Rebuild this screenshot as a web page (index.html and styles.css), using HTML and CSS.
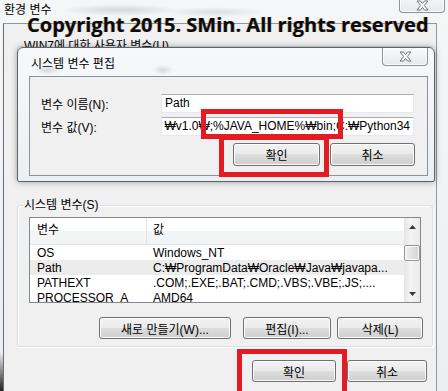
FILE: index.html
```html
<!DOCTYPE html>
<html lang="ko">
<head>
    <meta charset="utf-8">
    <title>환경 변수</title>
    <link rel="stylesheet" href="styles.css">
</head>
<body>
<div class="screen">
    <div class="win">
        <div class="win-title">
            <span class="win-caption">환경 변수</span>
            <div class="close-btn win-close">
                <svg width="13" height="11" viewBox="0 0 13 11"><polygon points="1,1 4.5,1 6.5,3.6 8.5,1 12,1 8.3,5.5 12,10 8.5,10 6.5,7.4 4.5,10 1,10 4.7,5.5" /></svg>
            </div>
        </div>
        <div class="win-client">
            <fieldset class="group user-group">
                <legend>WIN7에 대한 사용자 변수(U)</legend>
            </fieldset>
            <fieldset class="group sys-group">
                <legend>시스템 변수(S)</legend>
                <div class="list">
                    <div class="list-body">
                        <div class="list-head"><span>변수</span><span>값</span></div>
                        <div class="row"><span>OS</span><span>Windows_NT</span></div>
                        <div class="row row-sel"><span>Path</span><span>C:₩ProgramData₩Oracle₩Java₩javapa...</span></div>
                        <div class="row"><span>PATHEXT</span><span>.COM;.EXE;.BAT;.CMD;.VBS;.VBE;.JS;....</span></div>
                        <div class="row"><span>PROCESSOR_A</span><span>AMD64</span></div>
                    </div>
                    <div class="scroll">
                        <div class="scroll-arrow"><svg width="7" height="4" viewBox="0 0 7 4"><polygon points="0,4 3.5,0 7,4" /></svg></div>
                        <div class="scroll-track"><div class="scroll-thumb"></div></div>
                        <div class="scroll-arrow"><svg width="7" height="4" viewBox="0 0 7 4"><polygon points="0,0 7,0 3.5,4" /></svg></div>
                    </div>
                </div>
                <div class="btn-row">
                    <button class="btn btn-new">새로 만들기(W)...</button>
                    <button class="btn btn-edit">편집(I)...</button>
                    <button class="btn btn-del">삭제(L)</button>
                </div>
            </fieldset>
            <div class="win-buttons">
                <button class="btn btn-ok">확인</button>
                <button class="btn btn-cancel">취소</button>
            </div>
        </div>
    </div>

    <!-- 시스템 변수 편집 창 -->
    <div class="dlg">
        <div class="dlg-title">
            <span class="dlg-caption">시스템 변수 편집</span>
            <div class="close-btn dlg-close">
                <svg width="13" height="11" viewBox="0 0 13 11"><polygon points="1,1 4.5,1 6.5,3.6 8.5,1 12,1 8.3,5.5 12,10 8.5,10 6.5,7.4 4.5,10 1,10 4.7,5.5" /></svg>
            </div>
        </div>
        <div class="dlg-client">
            <div class="field">
                <label class="field-label">변수 이름(N):</label>
                <div class="input">Path</div>
            </div>
            <div class="field">
                <label class="field-label">변수 값(V):</label>
                <div class="input input-end"><span>₩v1.0₩;%JAVA_HOME%₩bin;C:₩Python34</span></div>
            </div>
            <div class="dlg-buttons">
                <button class="btn btn-ok">확인</button>
                <button class="btn btn-cancel">취소</button>
            </div>
        </div>
    </div>

    <div class="watermark">Copyright 2015. SMin. All rights reserved</div>

    <div class="mark mark-value"></div>
    <div class="mark mark-ok"></div>
    <div class="mark mark-main-ok"></div>
</div>
</body>
</html>
```

FILE: styles.css
```css
body {
    margin: 0;
    font: 12px "Liberation Sans", "Noto Sans CJK KR", sans-serif;
    color: #000;
}

.screen {
    position: relative;
    width: 448px;
    height: 391px;
    overflow: hidden;
    background: linear-gradient(#f6f7f9, #e9edf1);
}

/* 바깥 창 */
.win {
    display: flex;
    flex-direction: column;
    height: 100%;
    box-sizing: border-box;
    padding-left: 3px;
    padding-right: 11px;
    background:
        linear-gradient(transparent 90%, #222) 0 0 / 3px 100% no-repeat,
        radial-gradient(ellipse 60px 6px at 120px 10px, rgba(120, 120, 120, 0.25), transparent),
        radial-gradient(ellipse 50px 5px at 215px 12px, rgba(120, 120, 120, 0.2), transparent),
        linear-gradient(#f4f6f8, #eceff2);
}

.win-title {
    height: 23px;
    display: flex;
    align-items: flex-start;
    justify-content: space-between;
    flex-shrink: 0;
}

.win-caption {
    margin: 3px 0 0 1px;
    line-height: 14px;
}

.close-btn {
    display: flex;
    align-items: center;
    justify-content: center;
    box-sizing: border-box;
    border: 1px solid #8d9296;
    border-top: none;
    border-radius: 0 0 4px 4px;
    background: linear-gradient(#fbfbfb, #e6e8ea);
    box-shadow: inset 0 0 0 1px rgba(255, 255, 255, 0.8);
}

.close-btn svg polygon {
    fill: #fff;
    stroke: #6f7478;
    stroke-width: 1;
}

.win-close {
    width: 46px;
    height: 21px;
    margin: -8px -8px 0 0;
    padding-top: 6px;
}

.win-client {
    flex: 1;
    background: #f0f0f0;
    border: 1px solid #8e98a2;
    border-left-color: #6a6e72;
    border-bottom: none;
}

.group {
    margin: 0 3px 0 13px;
    padding: 6px 11px 7px;
    border: 1px solid #d5dfe5;
    border-radius: 3px;
    min-width: 0;
    box-shadow: inset 1px 1px 0 #fff, 1px 1px 0 #fff;
}

.group legend {
    padding: 0 1px;
    margin-left: -6px;
    line-height: 12px;
}

.user-group {
    margin-top: 16px;
    height: 140px;
    box-sizing: border-box;
}

.sys-group {
    margin-top: 19px;
}

/* 목록 */
.list {
    display: flex;
    height: 86px;
    box-sizing: border-box;
    border: 1px solid #828790;
    background: #fff;
    overflow: hidden;
}

.list-body {
    flex: 1;
    min-width: 0;
}

.list-head {
    display: grid;
    grid-template-columns: 117px 1fr;
    height: 27px;
    line-height: 25px;
    background: linear-gradient(#fff 50%, #f3f4f6 50%);
    border-bottom: 1px solid #e3e6ea;
    box-sizing: border-box;
}

.list-head span:first-child {
    border-right: 1px solid #e3e5e8;
}

.row {
    display: grid;
    grid-template-columns: 117px 1fr;
    height: 15px;
    line-height: 16px;
    white-space: nowrap;
}

.list-head span,
.row span {
    overflow: hidden;
    padding-left: 6px;
}

.list-head span:first-child,
.row span:first-child {
    padding-left: 7px;
}

.row-sel {
    background: #ececec;
}

.scroll {
    width: 16px;
    flex-shrink: 0;
    display: flex;
    flex-direction: column;
    background: linear-gradient(to right, #e4e4e4, #f4f4f4 40%, #eaeaea);
}

.scroll-arrow {
    height: 17px;
    display: flex;
    align-items: center;
    justify-content: center;
}

.scroll-arrow polygon {
    fill: #3a3a3a;
}

.scroll-track {
    flex: 1;
    padding-top: 10px;
}

.scroll-thumb {
    height: 16px;
    box-sizing: border-box;
    border: 1px solid #979797;
    border-radius: 2px;
    background: linear-gradient(to right, #f3f3f3, #e2e2e2 50%, #d4d4d4);
    box-shadow: inset 0 0 0 1px #fafafa;
}

/* 버튼 */
.btn {
    height: 22px;
    box-sizing: border-box;
    padding: 0;
    border: 1px solid #707070;
    border-radius: 3px;
    background: linear-gradient(#f2f2f2 0%, #ebebeb 50%, #dddddd 50%, #cfcfcf 100%);
    box-shadow: inset 0 0 0 1px #fbfbfb;
    font: inherit;
    color: #000;
}

.btn-row {
    display: flex;
    justify-content: flex-end;
    margin-top: 14px;
    margin-right: -2px;
}

.btn-new {
    width: 132px;
    margin-right: 12px;
}

.btn-edit {
    width: 88px;
    margin-right: 6px;
}

.btn-del {
    width: 86px;
}

.win-buttons {
    display: flex;
    justify-content: flex-end;
    gap: 11px;
    margin-top: 13px;
    padding-right: 9px;
}

.win-buttons .btn-ok {
    width: 84px;
}

.win-buttons .btn-cancel {
    width: 80px;
}

/* 시스템 변수 편집 */
.dlg {
    position: absolute;
    left: 17px;
    top: 47px;
    width: 418px;
    height: 135px;
    box-sizing: border-box;
    padding: 0 6px 5px 11px;
    display: flex;
    flex-direction: column;
    border: 1px solid #5f6368;
    border-radius: 6px 6px 2px 2px;
    background:
        radial-gradient(ellipse 14px 5px at 30px 22px, rgba(120, 120, 120, 0.25), transparent),
        radial-gradient(ellipse 10px 5px at 145px 22px, rgba(120, 120, 120, 0.25), transparent),
        linear-gradient(#f7f8fa, #eceff2);
    box-shadow: 0 0 6px rgba(0, 0, 0, 0.35);
}

.dlg-title {
    height: 28px;
    display: flex;
    justify-content: space-between;
    align-items: flex-start;
    flex-shrink: 0;
}

.dlg-caption {
    margin: 9px 0 0 2px;
    line-height: 14px;
}

.dlg-close {
    width: 46px;
    height: 18px;
}

.dlg-client {
    flex: 1;
    display: flex;
    flex-direction: column;
    gap: 4px;
    padding: 17px 12px 0 11px;
    background: #f0f0f0;
    border: 1px solid #8b949c;
}

.field {
    display: flex;
    align-items: center;
}

.field-label {
    width: 120px;
}

.input {
    width: 253px;
    height: 19px;
    box-sizing: border-box;
    line-height: 17px;
    padding: 0 3px;
    background: #fff;
    border: 1px solid #e3e9ef;
    border-top-color: #abadb3;
    white-space: nowrap;
    overflow: hidden;
}

.input-end {
    display: flex;
    justify-content: flex-end;
}

.dlg-buttons {
    display: flex;
    justify-content: flex-end;
    gap: 10px;
    margin-top: 3px;
}

.dlg-buttons .btn {
    height: 23px;
}

.dlg-buttons .btn-ok {
    width: 87px;
}

.dlg-buttons .btn-cancel {
    width: 85px;
}

/* 워터마크 */
.watermark {
    position: absolute;
    left: 27px;
    top: 15px;
    font: 700 20px/20px "Open Sans", sans-serif;
    color: #0a0a0a;
    white-space: nowrap;
    text-shadow: -0.6px 0 rgba(230, 140, 20, 0.55), 0.6px 0 rgba(30, 80, 200, 0.35);
}

/* 빨간 표시 */
.mark {
    position: absolute;
    box-sizing: border-box;
    border: 5px solid #e51b24;
}

.mark-value {
    left: 201px;
    top: 109px;
    width: 142px;
    height: 30px;
}

.mark-ok {
    left: 219px;
    top: 135px;
    width: 110px;
    height: 42px;
}

.mark-main-ok {
    left: 237px;
    top: 349px;
    width: 110px;
    height: 60px;
}
```
